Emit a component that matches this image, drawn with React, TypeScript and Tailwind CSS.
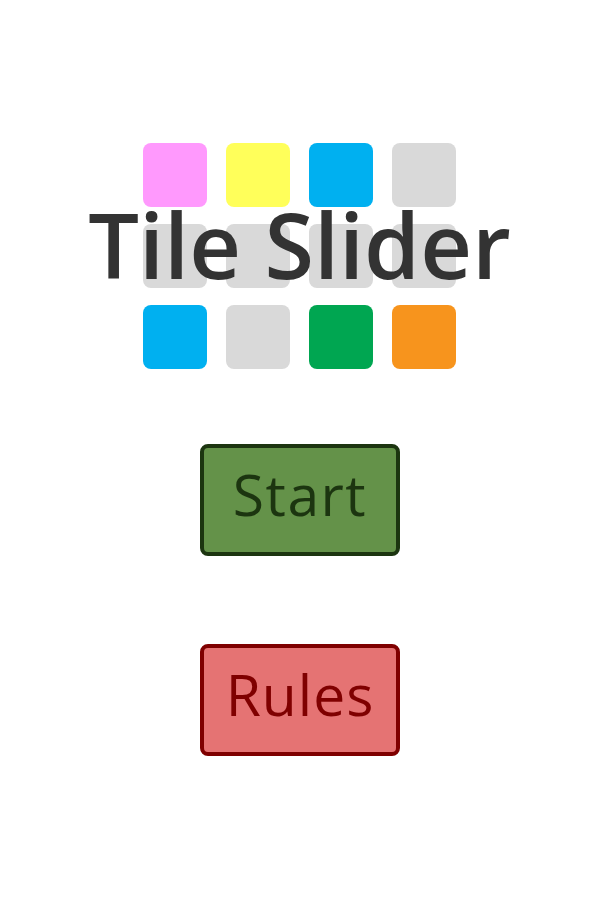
import React from "react";

const tiles = [
  "bg-[#ff99fd]", "bg-[#ffff5a]", "bg-[#00b0f0]", "bg-[#d9d9d9]",
  "bg-[#d9d9d9]", "bg-[#d9d9d9]", "bg-[#d9d9d9]", "bg-[#d9d9d9]",
  "bg-[#00b0f0]", "bg-[#d9d9d9]", "bg-[#00a651]", "bg-[#f7941d]",
];

export default function App() {
  return (
    <div className="w-[600px] h-[900px] bg-white flex flex-col items-center pt-[143px] pr-[1px]" style={{ fontFamily: '"Trebuchet MS", "Open Sans", sans-serif' }}>
      <div className="relative">
        <div className="grid grid-cols-[64px_64px_64px_64px] gap-x-[19px] gap-y-[17px]">
          {tiles.map((c, i) => (
            <div key={i} className={`w-16 h-16 rounded-lg ${c}`} />
          ))}
        </div>
        <div className="absolute left-1/2 -translate-x-1/2 top-[56px] whitespace-nowrap text-[90px] leading-none font-semibold text-[#333333]">
          Tile Slider
        </div>
      </div>
      <button className="mt-[75px] w-[200px] h-[112px] rounded-lg border-4 border-[#1c3510] bg-[#649249] text-[#1c3510] text-[57px] tracking-[1.5px] pl-[1px] leading-none flex items-center justify-center pb-3">
        Start
      </button>
      <button className="mt-[88px] w-[200px] h-[112px] rounded-lg border-4 border-[#7f0000] bg-[#e57373] text-[#7f0000] text-[57px] tracking-[1px] pl-[1px] leading-none flex items-center justify-center pb-3">
        Rules
      </button>
    </div>
  );
}
